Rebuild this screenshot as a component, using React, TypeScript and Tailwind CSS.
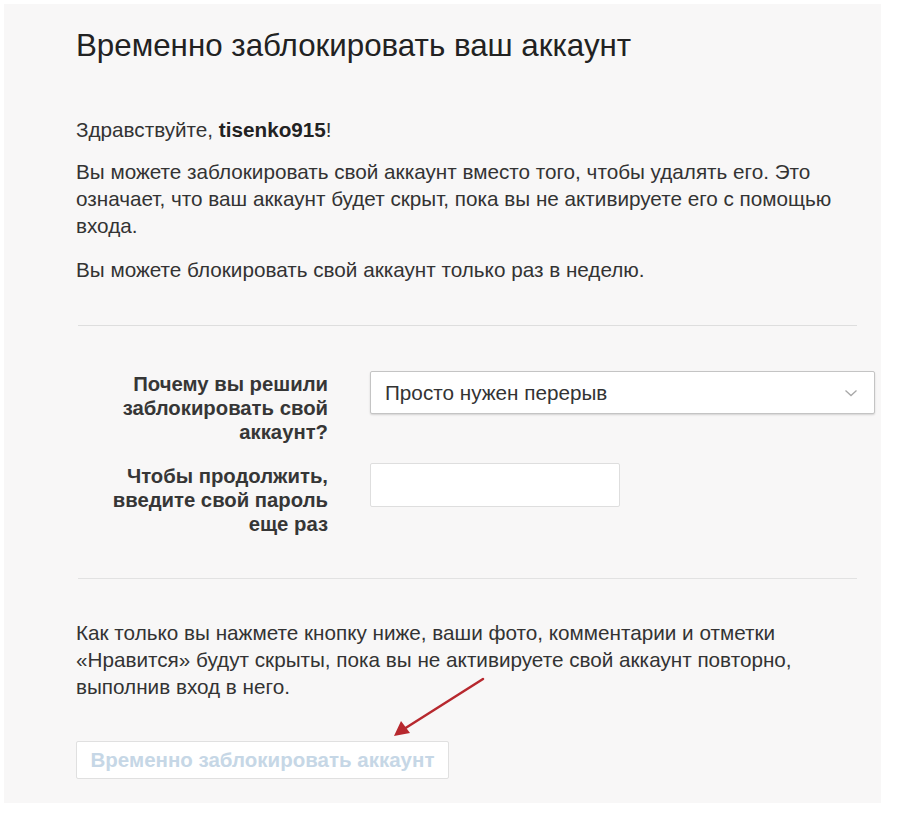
import * as React from "react";

const font = { fontFamily: '"Liberation Sans", Arial, sans-serif' };

function Chevron() {
  return (
    <svg width="14" height="8" viewBox="0 0 14 8" fill="none">
      <path d="M1.5 1.5l5.5 5 5.5-5" stroke="#a8a8a8" strokeWidth="1.3" />
    </svg>
  );
}

function RedArrow() {
  return (
    <svg
      className="absolute left-[388px] top-[672px]"
      width="100"
      height="70"
      viewBox="0 0 100 70"
      fill="none"
    >
      <path d="M95 7L16 57" stroke="#b7282e" strokeWidth="2.5" strokeLinecap="round" />
      <path d="M6 64l7-15 9 12z" fill="#b7282e" />
    </svg>
  );
}

export default function App() {
  return (
    <div className="relative h-[816px] w-[900px] bg-white pl-[4px] pt-[4px]" style={font}>
      <div className="h-[799px] w-[877px] bg-[#f8f7f7] pl-[72px] pt-[22px] text-[#333]">
        <h1 className="text-[31.3px] leading-[40px] text-[#222]">
          Временно заблокировать ваш аккаунт
        </h1>

        <div className="mt-[50px] text-[20.7px] leading-[27px]">
          <p>
            Здравствуйте, <span className="font-bold text-[#222]">tisenko915</span>!
          </p>
          <p className="mt-[15px]">
            Вы можете заблокировать свой аккаунт вместо того, чтобы удалять его. Это
            <br />
            означает, что ваш аккаунт будет скрыт, пока вы не активируете его с помощью
            <br />
            входа.
          </p>
          <p className="mt-[17px]">
            Вы можете блокировать свой аккаунт только раз в неделю.
          </p>
        </div>

        <div className="mt-[42px] ml-[2px] h-px w-[779px] bg-[#dedede]" />

        <div className="mt-[45px] flex flex-col gap-[19px]">
          <div className="flex items-start">
            <label className="mt-px w-[252px] text-right text-[20.3px] font-bold leading-[24px] text-[#363636]">
              Почему вы решили
              <br />
              заблокировать свой
              <br />
              аккаунт?
            </label>
            <div className="ml-[42px] flex h-[43px] w-[505px] items-center justify-between rounded-[2px] border border-[#c4c4c4] bg-white pl-[14px] pr-[16px] shadow-[0_1px_2px_rgba(0,0,0,0.15)]">
              <span className="text-[20.7px] text-[#333]">Просто нужен перерыв</span>
              <Chevron />
            </div>
          </div>
          <div className="flex items-start">
            <label className="mt-px w-[252px] text-right text-[20.3px] font-bold leading-[24px] text-[#363636]">
              Чтобы продолжить,
              <br />
              введите свой пароль
              <br />
              еще раз
            </label>
            <div className="ml-[42px] h-[44px] w-[250px] rounded-[2px] border border-[#dedede] bg-white" />
          </div>
        </div>

        <div className="mt-[42px] ml-[2px] h-px w-[779px] bg-[#e2e2e2]" />

        <p className="mt-[40px] text-[20.7px] leading-[27px]">
          Как только вы нажмете кнопку ниже, ваши фото, комментарии и отметки
          <br />
          «Нравится» будут скрыты, пока вы не активируете свой аккаунт повторно,
          <br />
          выполнив вход в него.
        </p>

        <button
          type="button"
          disabled
          className="mt-[41px] h-[38px] w-[373px] rounded-[2px] border border-[#e0e0e0] bg-white text-[20.5px] font-bold text-[#c6d7e6]"
        >
          Временно заблокировать аккаунт
        </button>
      </div>
      <RedArrow />
    </div>
  );
}
